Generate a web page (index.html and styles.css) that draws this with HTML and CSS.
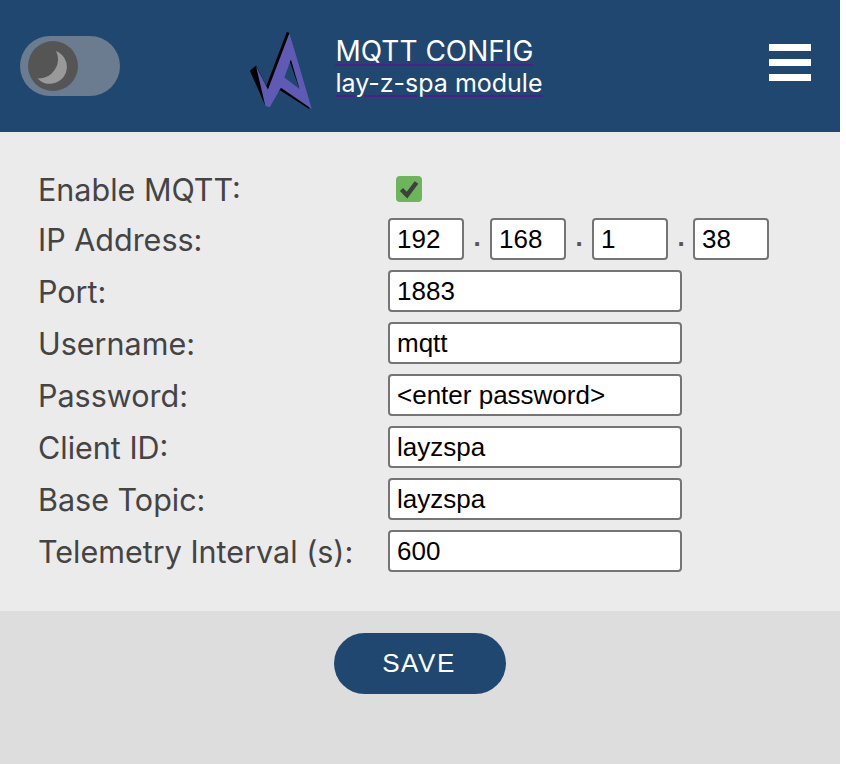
FILE: index.html
```html
<!DOCTYPE html>
<html lang="en">
<head>
  <meta charset="UTF-8" />
  <title>MQTT Config</title>
  <link rel="stylesheet" href="styles.css">
</head>
<body>

<div class="page">
  <header class="topbar">
    <div class="switch">
      <span class="knob">
        <svg class="moon" viewBox="0 0 50 50" width="50" height="50">
          <path d="M28 10 A17 17 0 1 1 9.3 37.3 A19 19 0 0 0 28 10 Z" fill="#999"/>
        </svg>
      </span>
    </div>

    <div class="brand">
      <svg class="logo" viewBox="0 0 66 78" width="68" height="80">
        <path fill="#000" fill-rule="evenodd" d="M1.7 38.7 L7.7 33.7 L17.7 53.7 L37.7 1 L40.3 2 L60 76.3 L31 57.7 L16.7 73 Z M40 28 L34 45 L50 56.5 Z"/>
        <path fill="#5f5bb5" fill-rule="evenodd" d="M7.7 34.3 L19.3 57 L40.3 2 L62 76 L32 55.3 L21 74.3 L16.7 73 Z M41.7 27.7 L35.3 45.3 L50 56.3 Z"/>
      </svg>
      <div class="brand-text">
        <a class="title" href="#">MQTT CONFIG</a>
        <a class="subtitle" href="#">lay-z-spa module</a>
      </div>
    </div>

    <div class="burger">
      <span></span>
      <span></span>
      <span></span>
    </div>
  </header>

  <main class="content">
    <form class="config-form">
      <label class="first">Enable MQTT:</label>
      <div class="first">
        <span class="checkbox">
          <svg viewBox="0 0 26 26" width="26" height="26">
            <path d="M5.5 13.5 L11 19 L20.5 6.5" fill="none" stroke="#3f3f3f" stroke-width="4.5"/>
          </svg>
        </span>
      </div>

      <label>IP Address:</label>
      <div class="ip-row">
        <input class="ip" type="text" value="192">
        <span class="dot">.</span>
        <input class="ip" type="text" value="168">
        <span class="dot">.</span>
        <input class="ip" type="text" value="1">
        <span class="dot">.</span>
        <input class="ip" type="text" value="38">
      </div>

      <label>Port:</label>
      <input type="text" value="1883">

      <label>Username:</label>
      <input type="text" value="mqtt">

      <label>Password:</label>
      <input type="text" value="&lt;enter password&gt;">

      <label>Client ID:</label>
      <input type="text" value="layzspa">

      <label>Base Topic:</label>
      <input type="text" value="layzspa">

      <label>Telemetry Interval (s):</label>
      <input type="text" value="600">
    </form>
  </main>

  <footer class="actions">
    <button type="button">SAVE</button>
  </footer>
</div>

</body>
</html>
```

FILE: styles.css
```css
* {
  box-sizing: border-box;
}

html, body {
  height: 100%;
}

body {
  margin: 0;
  background: #fff;
  font-family: "Liberation Sans", Arial, sans-serif;
  overflow: hidden;
}

.page {
  width: 840px;
  height: 764px;
  display: flex;
  flex-direction: column;
}

.topbar {
  height: 132px;
  flex: none;
  background: #20476f;
  display: flex;
  align-items: center;
  justify-content: space-between;
  padding: 0 29px 0 20px;
}

.switch {
  width: 100px;
  height: 60px;
  border-radius: 30px;
  background: #6b7b90;
  display: flex;
  align-items: center;
  padding-left: 8px;
}

.knob {
  width: 50px;
  height: 50px;
  border-radius: 50%;
  background: #555;
  display: block;
}

.moon {
  display: block;
}

.brand {
  display: flex;
  align-items: center;
  gap: 19px;
  margin-left: -98px;
}

.logo {
  display: block;
  margin-top: 10px;
}

.brand-text {
  display: flex;
  flex-direction: column;
  gap: 1px;
  padding-top: 3px;
  font-family: Inter, "Liberation Sans", sans-serif;
}

.title, .subtitle {
  color: #fff;
  text-decoration: underline #551a8b 2px;
  text-underline-offset: 3px;
  line-height: 31px;
}

.title {
  font-size: 28px;
}

.subtitle {
  font-size: 25px;
}

.burger {
  width: 42px;
  display: flex;
  flex-direction: column;
  gap: 8px;
  margin-bottom: 8px;
}

.burger span {
  height: 7px;
  background: #fff;
}

.content {
  height: 479px;
  flex: none;
  background: #ebebeb;
  padding: 34px 0 0 38px;
}

.config-form {
  display: grid;
  grid-template-columns: 350px 381px;
  grid-auto-rows: 52px;
  align-items: start;
}

.config-form label {
  font-family: Inter, "Liberation Sans", sans-serif;
  font-size: 30.5px;
  line-height: 44px;
  color: #444;
}

.config-form label.first {
  line-height: 47px;
}

.config-form .first {
  height: 52px;
}

.config-form input {
  width: 294px;
  height: 42px;
  border: 2px solid #757575;
  border-radius: 4px;
  background: #fff;
  color: #000;
  font-family: inherit;
  font-size: 26px;
  padding: 0 7px;
}

.checkbox {
  display: block;
  width: 26px;
  height: 26px;
  margin: 10px 0 0 8px;
  border-radius: 4px;
  background: #6cb55a;
}

.checkbox svg {
  display: block;
}

.ip-row {
  display: flex;
  width: 381px;
}

.config-form .ip {
  width: 76px;
  flex: none;
}

.dot {
  width: 26px;
  text-align: center;
  font-size: 26px;
  font-weight: bold;
  line-height: 38px;
  color: #555;
}

.dot:last-of-type {
  margin-right: -1px;
}

.actions {
  flex: 1;
  background: #ddd;
  display: flex;
  justify-content: center;
  align-items: flex-start;
  padding-top: 22px;
}

.actions button {
  width: 172px;
  height: 61px;
  padding: 0 2px 0 0;
  border: none;
  border-radius: 31px;
  background: #20476f;
  color: #fff;
  font-family: inherit;
  font-size: 26px;
  letter-spacing: 1.5px;
}
```
